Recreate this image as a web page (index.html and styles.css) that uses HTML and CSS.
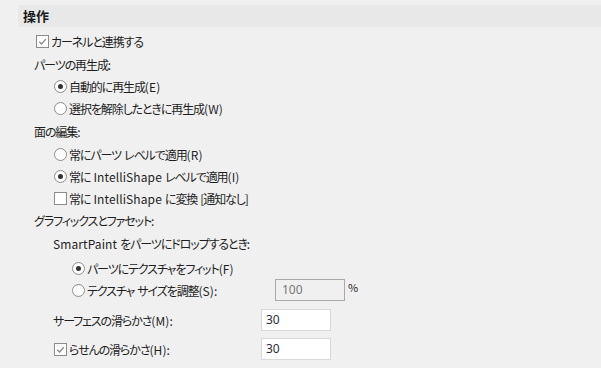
FILE: index.html
```html
<!DOCTYPE html>
<html lang="ja">
<head>
<meta charset="utf-8">
<link rel="stylesheet" href="styles.css">
</head>
<body>
<div class="panel">
  <div class="header">操作</div>
  <div class="rows">
    <div class="row ind1 gap3"><span class="cb checked"><svg viewBox="0 0 12 12"><path d="M2.5 6.2 L5 8.6 L9.6 3.4" /></svg></span><span class="txt">カーネルと連携する</span></div>
    <div class="row ind0 title">パーツの再生成:</div>
    <div class="row ind2"><span class="rb on"></span><span class="txt">自動的に再生成<span class="lat">(E)</span></span></div>
    <div class="row ind2"><span class="rb"></span><span class="txt">選択を解除したときに再生成<span class="lat">(W)</span></span></div>
    <div class="row ind0 title">面の編集:</div>
    <div class="row ind2 gap1"><span class="rb"></span><span class="txt">常にパーツ レベルで適用<span class="lat">(R)</span></span></div>
    <div class="row ind2"><span class="rb on"></span><span class="txt">常に <span class="lat">IntelliShape</span> レベルで適用<span class="lat">(I)</span></span></div>
    <div class="row ind2"><span class="cb"></span><span class="txt">常に <span class="lat">IntelliShape</span> に変換 [通知なし]</span></div>
    <div class="row ind0">グラフィックスとファセット:</div>
    <div class="row ind3 title"><span class="lat">SmartPaint</span> をパーツにドロップするとき:</div>
    <div class="row ind4 gap3"><span class="rb on"></span><span class="txt">パーツにテクスチャをフィット<span class="lat">(F)</span></span></div>
    <div class="row ind4"><span class="rb"></span><span class="txt lab-s">テクスチャ サイズを調整<span class="lat">(S)</span>:</span><span class="field disabled">100</span><span class="unit">%</span></div>
    <div class="row ind3 gap8"><span class="lab-m">サーフェスの滑らかさ<span class="lat">(M)</span>:</span><span class="field">30</span></div>
    <div class="row ind3b gap7"><span class="cb checked"><svg viewBox="0 0 12 12"><path d="M2.5 6.2 L5 8.6 L9.6 3.4" /></svg></span><span class="txt lab-h">らせんの滑らかさ<span class="lat">(H)</span>:</span><span class="field">30</span></div>
  </div>
</div>
</body>
</html>
```

FILE: styles.css
```css
html, body {
  margin: 0;
  padding: 0;
  background: #f0f0f0;
}
body {
  font-family: "Noto Sans CJK JP", "Noto Sans", sans-serif;
  font-size: 12px;
  color: #1e1e1e;
  width: 601px;
  height: 368px;
  overflow: hidden;
  font-feature-settings: "palt";
}
.panel {
  padding-top: 5px;
}
.header {
  margin-left: 18px;
  height: 22px;
  line-height: 22px;
  background: #e8e8e8;
  padding-left: 5px;
  font-weight: bold;
  font-size: 13px;
  color: #1a1a1a;
}
.rows {
  display: flex;
  flex-direction: column;
}
.row {
  height: 22px;
  display: flex;
  align-items: center;
  white-space: pre;
  letter-spacing: -1.1px;
  word-spacing: 1.5px;
}
.lat { letter-spacing: 0.1px; }
.title { margin-top: 1px; }
.gap1 { margin-top: 1px; }
.gap3 { margin-top: 3px; }
.gap7 { margin-top: 7px; }
.gap8 { margin-top: 8px; }
.ind0 { padding-left: 34px; }
.ind1 { padding-left: 36px; }
.ind2 { padding-left: 54px; }
.ind3 { padding-left: 53px; }
.ind3b { padding-left: 54px; }
.ind4 { padding-left: 72px; }

.cb {
  width: 11px;
  height: 11px;
  border: 1px solid #8c8c8c;
  background: #fff;
  flex: none;
  display: flex;
}
.cb svg {
  width: 11px;
  height: 11px;
  fill: none;
  stroke: #8a8a8a;
  stroke-width: 1.5;
}
.rb {
  width: 11px;
  height: 11px;
  border: 1px solid #8c8c8c;
  border-radius: 50%;
  background: #fff;
  flex: none;
  display: flex;
  align-items: center;
  justify-content: center;
}
.rb.on::after {
  content: "";
  width: 5px;
  height: 5px;
  border-radius: 50%;
  background: #333;
}
.txt { margin-left: 2px; }
.lab-s { width: 188px; }
.lab-m { width: 208px; }
.lab-h { width: 192px; }
.field {
  box-sizing: border-box;
  width: 70px;
  height: 22px;
  border: 1px solid #d9d9d9;
  background: #fff;
  padding-left: 4px;
  line-height: 20px;
  color: #2b2b3a;
  font-family: "Noto Sans", sans-serif;
  font-size: 12px;
  letter-spacing: 0;
}
.field.disabled {
  border-color: #a9a9a9;
  background: #f0f0f0;
  color: #777;
  padding-left: 6px;
}
.unit {
  margin-left: 3px;
  margin-top: -6px;
  font-size: 11px;
  letter-spacing: 0;
}
```
